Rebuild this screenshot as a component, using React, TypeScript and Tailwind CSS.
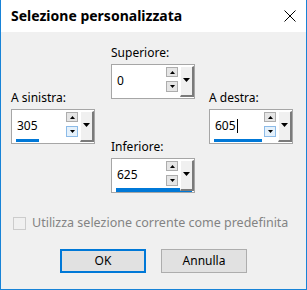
import React from 'react';

const font = "font-['Segoe_UI','Noto_Sans',sans-serif]";

function SpinArrow({ up }: { up?: boolean }) {
  return (
    <svg width="5" height="3" viewBox="0 0 5 3">
      <path d={up ? 'M2.5 0 L5 3 L0 3 Z' : 'M0 0 L5 0 L2.5 3 Z'} fill="#000" />
    </svg>
  );
}

function NumberField({
  label,
  value,
  bar,
  barHeight = 'h-[3px]',
  hot,
  caret,
}: {
  label: string;
  value: string;
  bar?: number;
  barHeight?: string;
  hot?: boolean;
  caret?: boolean;
}) {
  return (
    <div className="flex flex-col">
      <label className="text-[12px] leading-4 text-black">{label}</label>
      <div className="mt-[3px] flex h-[35px] w-[84px] border border-[#a6a6a6] bg-white">
        {/* Edit + spin */}
        <div className="flex w-[67px] flex-col">
          <div className="flex h-[29px] items-stretch">
            <div className="flex flex-1 items-center pl-[5px] pt-[3px] text-[12px] leading-4 text-black">
              {value}
              {caret && <span className="ml-[1px] inline-block h-[14px] w-px bg-black" />}
            </div>
            <div className="flex w-[13px] flex-col pt-[2px]">
              <div className="flex h-[10px] w-[12px] items-center justify-center border border-[#adadad] bg-[#e5e5e5]">
                <SpinArrow up />
              </div>
              <div
                className={`mt-[4px] flex h-[11px] w-[12px] items-center justify-center border ${
                  hot ? 'border-[#8cbbe8] bg-[#e5f1fb]' : 'border-[#adadad] bg-[#e5e5e5]'
                }`}
              >
                <SpinArrow />
              </div>
            </div>
          </div>
          <div className="pl-[4px]">
            {bar !== undefined && bar > 0 && (
              <div className={`${barHeight} bg-[#0078d7]`} style={{ width: bar }} />
            )}
          </div>
        </div>
        {/* Dropdown */}
        <div className="ml-[1px] flex w-[14px] flex-col py-px">
          <div className="flex flex-1 items-center justify-center border-b-2 border-l border-r-2 border-t border-b-[#7a7a7a] border-l-white border-r-[#7a7a7a] border-t-white bg-[#f0f0f0] pb-[2px]">
            <svg width="7" height="4" viewBox="0 0 7 4">
              <path d="M0 0 L7 0 L3.5 4 Z" fill="#000" />
            </svg>
          </div>
        </div>
      </div>
    </div>
  );
}

export default function App() {
  return (
    <div className={`flex h-[290px] w-[307px] flex-col border-x border-b border-[#1883d7] bg-[#f0f0f0] ${font}`}>
      {/* Title bar */}
      <div className="flex h-[32px] items-center justify-between bg-white pl-[10px] pr-[10px]">
        <span className="text-[14px] font-bold leading-5 text-black">Selezione personalizzata</span>
        <svg width="12" height="12" viewBox="0 0 12 12">
          <path d="M0.5 0.5 L11.5 11.5 M11.5 0.5 L0.5 11.5" stroke="#000" strokeWidth="1" />
        </svg>
      </div>

      {/* Fields */}
      <div className="flex pl-[10px]">
        <div className="pt-[58px]">
          <NumberField label="A sinistra:" value="305" bar={23} hot />
        </div>
        <div className="ml-[16px] flex flex-col gap-[40px] pt-[13px]">
          <NumberField label="Superiore:" value="0" />
          <NumberField label="Inferiore:" value="625" bar={76} barHeight="h-[4px]" />
        </div>
        <div className="ml-[14px] pt-[58px]">
          <NumberField label="A destra:" value="605" bar={48} hot caret />
        </div>
      </div>

      {/* Checkbox */}
      <div className="mt-[22px] flex items-center pl-[12px]">
        <span className="h-[13px] w-[13px] border border-[#cccccc] bg-[#f0f0f0]" />
        <span className="ml-[6px] text-[12.5px] leading-4 text-[#838383]">
          Utilizza selezione corrente come predefinita
        </span>
      </div>

      {/* Buttons */}
      <div className="mt-[18px] flex justify-center gap-[15px]">
        <button className="h-[24px] w-[86px] border-2 border-[#0078d7] bg-[#e1e1e1] text-[12px] text-black">
          OK
        </button>
        <button className="h-[24px] w-[86px] border border-[#adadad] bg-[#e1e1e1] text-[12px] text-black">
          Annulla
        </button>
      </div>
    </div>
  );
}
